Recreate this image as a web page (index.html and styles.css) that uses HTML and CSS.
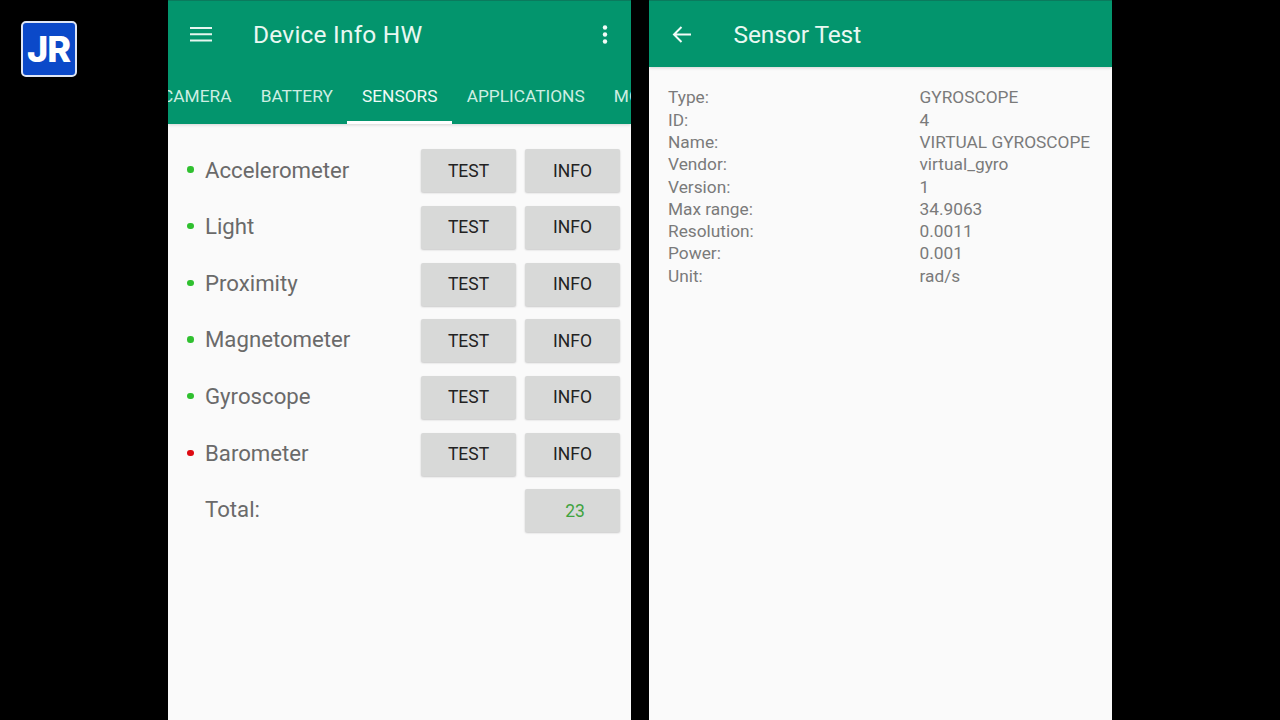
FILE: index.html
```html
<!DOCTYPE html>
<html lang="en">
  <head>
    <meta charset="UTF-8" />
    <meta name="viewport" content="width=device-width" />
    <title>Device Info HW - Sensor Test</title>
    <link rel="stylesheet" href="styles.css">
  </head>
  <body>
    <!-- channel badge sits on the black side band -->
    <div class="logo"><span>J</span><span class="logo-r">R</span></div>

    <div class="screens">
      <section class="phone">
        <header class="appbar">
          <div class="toolbar">
            <svg class="icon-menu" width="24" height="24" viewBox="0 0 24 24">
              <path d="M1 5h22v2H1zM1 11.3h22v2H1zM1 17.6h22v2H1z" fill="#e6f7f0" />
            </svg>
            <h1 class="title">Device Info HW</h1>
            <svg class="icon-more" width="24" height="24" viewBox="0 0 24 24">
              <circle cx="12" cy="5.5" r="2.2" fill="#f2fbf7" />
              <circle cx="12" cy="12.5" r="2.2" fill="#f2fbf7" />
              <circle cx="12" cy="19.5" r="2.2" fill="#f2fbf7" />
            </svg>
          </div>
          <nav class="tabs">
            <a class="tab">CAMERA</a>
            <a class="tab">BATTERY</a>
            <a class="tab active">SENSORS</a>
            <a class="tab">APPLICATIONS</a>
            <a class="tab">MORE</a>
          </nav>
        </header>

        <div class="sensor-list">
          <div class="sensor-row">
            <span class="sensor-name"><i class="dot"></i>Accelerometer</span>
            <button class="btn">TEST</button>
            <button class="btn">INFO</button>
          </div>
          <div class="sensor-row">
            <span class="sensor-name"><i class="dot"></i>Light</span>
            <button class="btn">TEST</button>
            <button class="btn">INFO</button>
          </div>
          <div class="sensor-row">
            <span class="sensor-name"><i class="dot"></i>Proximity</span>
            <button class="btn">TEST</button>
            <button class="btn">INFO</button>
          </div>
          <div class="sensor-row">
            <span class="sensor-name"><i class="dot"></i>Magnetometer</span>
            <button class="btn">TEST</button>
            <button class="btn">INFO</button>
          </div>
          <div class="sensor-row">
            <span class="sensor-name"><i class="dot"></i>Gyroscope</span>
            <button class="btn">TEST</button>
            <button class="btn">INFO</button>
          </div>
          <div class="sensor-row">
            <span class="sensor-name"><i class="dot dot-off"></i>Barometer</span>
            <button class="btn">TEST</button>
            <button class="btn">INFO</button>
          </div>
          <div class="sensor-row">
            <span class="sensor-name total-name">Total:</span>
            <button class="btn total">23</button>
          </div>
        </div>
      </section>

      <section class="phone">
        <header class="appbar">
          <div class="toolbar">
            <svg class="icon-back" width="24" height="24" viewBox="0 0 24 24">
              <path d="M21 12.5H4M11.5 5L4 12.5l7.5 7.5" fill="none" stroke="#f2fbf7" stroke-width="2" />
            </svg>
            <h1 class="title title-sub">Sensor Test</h1>
          </div>
        </header>

        <dl class="details">
          <dt>Type:</dt><dd>GYROSCOPE</dd>
          <dt>ID:</dt><dd>4</dd>
          <dt>Name:</dt><dd>VIRTUAL GYROSCOPE</dd>
          <dt>Vendor:</dt><dd>virtual_gyro</dd>
          <dt>Version:</dt><dd>1</dd>
          <dt>Max range:</dt><dd>34.9063</dd>
          <dt>Resolution:</dt><dd>0.0011</dd>
          <dt>Power:</dt><dd>0.001</dd>
          <dt>Unit:</dt><dd>rad/s</dd>
        </dl>
      </section>
    </div>
  </body>
</html>
```

FILE: styles.css
```css
body {
  font-family: Roboto, "Noto Sans", Arial, sans-serif;
  background-color: #000;
  margin: 0;
  padding: 0;
  height: 720px;
  overflow: hidden;
}

.logo {
  position: absolute;
  left: 21px;
  top: 21px;
  width: 56px;
  height: 56px;
  box-sizing: border-box;
  border: 2px solid #dfe6f5;
  border-radius: 5px;
  background-color: #0b49c9;
  display: flex;
  align-items: center;
  justify-content: center;
  color: #fff;
  font-family: Inter, "Liberation Sans", sans-serif;
  font-weight: 800;
  font-size: 36px;
}

.logo-r {
  margin-left: -1px;
}

.screens {
  display: flex;
  gap: 18px;
  padding-left: 168px;
}

.phone {
  width: 463px;
  height: 720px;
  background-color: #fafafa;
  overflow: hidden;
}

.appbar {
  background-color: #03956d;
  box-shadow: inset 0 1px 0 #0b7a5d, 0 1px 3px rgba(0, 0, 0, 0.15);
}

.toolbar {
  height: 67px;
  display: flex;
  align-items: center;
  padding: 0 14px 0 21px;
}

.title {
  flex: 1;
  margin: 2px 0 0 40px;
  font-size: 24.5px;
  font-weight: 400;
  color: #e9f8f2;
  letter-spacing: 0.2px;
}

.title-sub {
  letter-spacing: -0.1px;
  margin-left: 39.5px;
}

.tabs {
  height: 57px;
  display: flex;
  margin-left: -20.5px;
  white-space: nowrap;
}

.tab {
  flex: none;
  padding: 0 14.6px;
  line-height: 59px;
  height: 57px;
  font-size: 17.3px;
  color: #cdeee2;
}

.tab.active {
  color: #eefaf6;
  box-shadow: inset 0 -3px 0 #fff;
}

.sensor-list {
  display: flex;
  flex-direction: column;
  gap: 13.65px;
  padding: 25.3px 11px 0 19px;
}

.sensor-row {
  display: flex;
  align-items: center;
  gap: 9px;
  height: 43px;
}

.sensor-name {
  flex: 1;
  display: flex;
  align-items: center;
  font-size: 22.2px;
  color: #6a6a6a;
  margin-top: -2.5px;
}

.total-name {
  padding-left: 18px;
}

.dot {
  width: 6.5px;
  height: 6.5px;
  border-radius: 50%;
  background-color: #2fc02f;
  margin-right: 11.5px;
}

.dot-off {
  background-color: #de0a12;
}

.btn {
  width: 95px;
  height: 43px;
  padding: 0;
  border: none;
  border-radius: 2px;
  background-color: #d8d9d8;
  box-shadow: 0 1px 2px rgba(0, 0, 0, 0.2);
  font-family: inherit;
  font-size: 17.5px;
  color: #222;
}

.btn.total {
  color: #3fa33f;
  padding-left: 5px;
}

.details {
  display: grid;
  grid-template-columns: 251.5px 1fr;
  grid-auto-rows: 22.3px;
  margin: 0;
  padding: 19.4px 0 0 19px;
  font-size: 17.3px;
  line-height: 22.3px;
  color: #7a7a7a;
}

.details dd {
  margin: 0;
}
```
